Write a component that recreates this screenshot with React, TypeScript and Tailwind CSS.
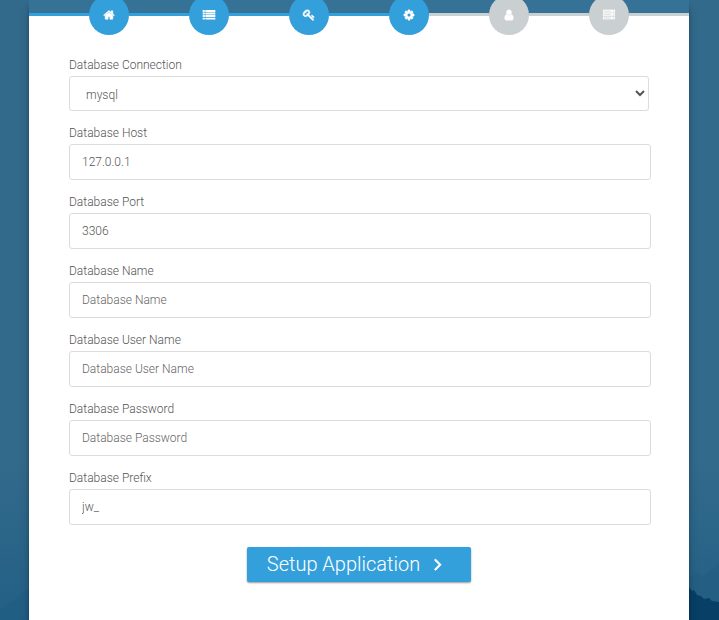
const icons = {
    home: 'M1472 992v480q0 26-19 45t-45 19h-384v-384h-256v384h-384q-26 0-45-19t-19-45v-480q0-1 .5-3t.5-3l575-474 575 474q1 2 1 6zm223-69l-62 74q-8 9-21 11h-3q-13 0-21-7l-692-577-692 577q-12 8-24 7-13-2-21-11l-62-74q-8-10-7-23.5t11-21.5l719-599q32-26 76-26t76 26l244 204v-195q0-14 9-23t23-9h192q14 0 23 9t9 23v408l219 182q10 8 11 21.5t-7 23.5z',
    list: 'M-50 150h320v290h-320zM350 150h1492v290h-1492zM-50 530h320v290h-320zM350 530h1492v290h-1492zM-50 910h320v290h-320zM350 910h1492v290h-1492zM-50 1290h320v290h-320zM350 1290h1492v290h-1492z',
    key: 'M832 512q0-80-56-136t-136-56-136 56-56 136q0 42 19 83-41-19-83-19-80 0-136 56t-56 136 56 136 136 56 136-56 56-136q0-42-19-83 41 19 83 19 80 0 136-56t56-136zm851 704q0 17-49 66t-66 49q-9 0-28.5-16t-36.5-33-38.5-40-24.5-26l-96 96 220 220q28 28 28 68 0 42-39 81t-81 39q-40 0-68-28l-671-671q-176 131-365 131-163 0-265.5-102.5t-102.5-265.5q0-160 95-313t248-248 313-95q163 0 265.5 102.5t102.5 265.5q0 189-131 365l355 355 96-96q-3-3-26-24.5t-40-38.5-33-36.5-16-28.5q0-17 49-66t66-49q13 0 23 10 6 6 46 44.5t82 79.5 86.5 86 73 78 28.5 41z',
    cog: 'M1152 896q0-106-75-181t-181-75-181 75-75 181 75 181 181 75 181-75 75-181zm512-109v222q0 12-8 23t-20 13l-185 28q-19 54-39 91 35 50 107 138 10 12 10 25t-9 23q-27 37-99 108t-94 71q-12 0-26-9l-138-108q-44 23-91 38-16 136-29 186-7 28-36 28h-222q-14 0-24.5-8.5t-11.5-21.5l-28-184q-49-16-90-37l-141 107q-10 9-25 9-14 0-25-11-126-114-165-168-7-10-7-23 0-12 8-23 15-21 51-66.5t54-70.5q-27-50-41-99l-183-27q-13-2-21-12.5t-8-23.5v-222q0-12 8-23t19-13l186-28q14-46 39-92-40-57-107-138-10-12-10-24 0-10 9-23 26-36 98.5-107.5t94.5-71.5q13 0 26 10l138 107q44-23 91-38 16-136 29-186 7-28 36-28h222q14 0 24.5 8.5t11.5 21.5l28 184q49 16 90 37l142-107q9-9 24-9 13 0 25 10 129 119 165 170 7 8 7 22 0 12-8 23-15 21-51 66.5t-54 70.5q26 50 41 98l183 28q13 2 21 12.5t8 23.5z',
    user: 'M1536 1399q0 109-62.5 187t-150.5 78h-854q-88 0-150.5-78t-62.5-187q0-85 8.5-160.5t31.5-152 58.5-131 94-89 134.5-34.5q131 128 313 128t313-128q76 0 134.5 34.5t94 89 58.5 131 31.5 152 8.5 160.5zm-256-887q0 159-112.5 271.5t-271.5 112.5-271.5-112.5-112.5-271.5 112.5-271.5 271.5-112.5 271.5 112.5 112.5 271.5z',
    server: 'M128 1408h1024v-128h-1024v128zm0-512h1024v-128h-1024v128zm1568 448q0-40-28-68t-68-28-68 28-28 68 28 68 68 28 68-28 28-68zm-1568-960h1024v-128h-1024v128zm1568 448q0-40-28-68t-68-28-68 28-28 68 28 68 68 28 68-28 28-68zm0-512q0-40-28-68t-68-28-68 28-28 68 28 68 68 28 68-28 28-68zm96 832v384h-1792v-384h1792zm0-512v384h-1792v-384h1792zm0-512v384h-1792v-384h1792z',
    angleRight: 'M1171 960q0 13-10 23l-466 466q-10 10-23 10t-23-10l-50-50q-10-10-10-23t10-23l393-393-393-393q-10-10-10-23t10-23l50-50q10-10 23-10t23 10l466 466q10 10 10 23z',
};

const steps = [
    { name: 'Welcome', icon: icons.home, weight: 70, active: true },
    { name: 'Requirements', icon: icons.list, weight: 0, active: true },
    { name: 'Permissions', icon: icons.key, weight: 70, active: true },
    { name: 'Environment', icon: icons.cog, weight: 70, active: true },
    { name: 'Admin', icon: icons.user, weight: 70, active: false },
    { name: 'Finished', icon: icons.server, weight: 30, active: false },
];

const fields = [
    { name: 'database_hostname', label: 'Database Host', type: 'text', value: '127.0.0.1' },
    { name: 'database_port', label: 'Database Port', type: 'text', value: '3306' },
    { name: 'database_name', label: 'Database Name', type: 'text', value: '' },
    { name: 'database_username', label: 'Database User Name', type: 'text', value: '' },
    { name: 'database_password', label: 'Database Password', type: 'password', value: '' },
    { name: 'database_prefix', label: 'Database Prefix', type: 'text', value: 'jw_' },
];

function Icon({ path, size, weight }: { path: string; size: number; weight: number }) {
    return (
        <svg width={size} height={size} viewBox="0 0 1792 1792" fill="currentColor" stroke="currentColor" strokeWidth={weight} className="overflow-visible" aria-hidden="true">
            <path d={path} />
        </svg>
    );
}

function Mountains() {
    return (
        <svg className="absolute bottom-0 left-0 w-full h-[160px]" viewBox="0 0 719 160" preserveAspectRatio="none" aria-hidden="true">
            <defs>
                <linearGradient id="haze" x1="0" y1="0" x2="0" y2="1">
                    <stop offset="0" stopColor="#1f5d84" stopOpacity="0" />
                    <stop offset="1" stopColor="#1f5d84" stopOpacity="0.8" />
                </linearGradient>
            </defs>
            <rect width="719" height="160" fill="url(#haze)" />
            <path d="M689 118 L697 113 L704 116 L719 103 V160 H689 Z" fill="#225c80" opacity="0.5" />
            <path d="M0 150 L8 143 L16 139 L24 131 L34 126 V160 H0 Z" fill="#1d5a82" opacity="0.3" />
            <path d="M680 122 L689 127 L692 131 L694 130 L697 135 L701 136 L704 139 L709 138 L712 141 L719 142 V160 H680 Z" fill="#073f66" />
        </svg>
    );
}

export default function App() {
    const handleSubmit = (e: any) => {
        e.preventDefault();
    }

    return (
        <div className="relative min-h-screen pr-px overflow-hidden bg-[#326a8b] font-['Roboto',sans-serif] font-light text-[#555]">
            <Mountains />
            <main className="relative max-w-[660px] min-h-screen mx-auto bg-white shadow-[0_10px_10px_rgba(0,0,0,0.19),0_6px_3px_rgba(0,0,0,0.23)]">
                <div className="h-[15px] bg-[#357295]">
                    <ul className="flex items-center -translate-y-[5px]">
                        {steps.map(({ name, icon, weight, active }) => (
                            <li key={name} className="contents">
                                <span className={active ? 'h-[3px] mb-px flex-1 bg-[#34a0db]' : 'h-[3px] mb-px flex-1 bg-[#cacfd2]'} />
                                <span title={name} className={active
                                    ? 'flex size-10 items-center justify-center rounded-full bg-[#34a0db] text-white'
                                    : 'flex size-10 items-center justify-center rounded-full bg-[#cacfd2] text-white'}>
                                    <Icon path={icon} size={12} weight={weight} />
                                </span>
                            </li>
                        ))}
                        <li className="h-[3px] mb-px flex-1 bg-[#cacfd2]" />
                    </ul>
                </div>
                <form method="POST" className="px-10 pt-[41px] pb-9 text-xs" onSubmit={handleSubmit}>
                    <div className="mb-[13px]">
                        <label htmlFor="database_connection" className="block h-5 leading-[18px]">Database Connection</label>
                        <select id="database_connection" name="database_connection" className="block w-full h-[35px] px-3 pt-0.5 rounded-[3px] border border-[#dcdcdc] bg-white">
                            <option value="mysql">mysql</option>
                        </select>
                    </div>
                    {fields.map((field) => (
                        <div key={field.name} className="mb-[13px]">
                            <label htmlFor={field.name} className="block h-5 leading-[18px]">{field.label}</label>
                            <input
                                id={field.name}
                                type={field.type}
                                name={field.name}
                                defaultValue={field.value}
                                placeholder={field.label}
                                className="block w-[calc(100%+2px)] h-9 px-3 rounded-[3px] border border-[#dcdcdc] bg-white placeholder:text-[#666]"
                            />
                        </div>
                    ))}
                    <div className="flex justify-center pt-[9px]">
                        <button type="submit" className="flex h-[35px] items-center gap-2 pl-5 pr-[23px] pb-px rounded-xs bg-[#34a0db] text-xl text-white shadow-[0_1px_2px_rgba(0,0,0,0.4)]">
                            Setup Application
                            <Icon path={icons.angleRight} size={20} weight={70} />
                        </button>
                    </div>
                </form>
            </main>
        </div>
    )
}
